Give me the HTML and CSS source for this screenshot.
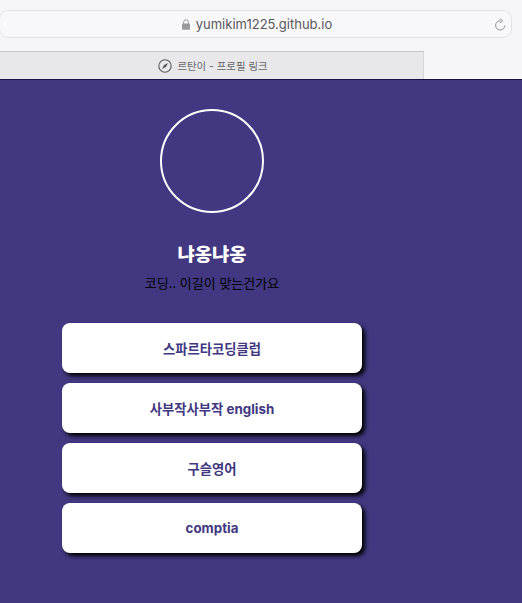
FILE: index.html
```html
<!DOCTYPE html>
<html lang="ko">
<head>
<meta charset="utf-8">
<title>르탄이 - 프로필 링크</title>
<link rel="stylesheet" href="styles.css">
</head>
<body>
<header class="chrome">
  <div class="address">
    <div class="address-center">
      <svg class="lock" viewBox="0 0 8 11" width="8" height="11"><path d="M1.6 5V3.2a2.4 2.4 0 0 1 4.8 0V5" fill="none" stroke="#9a999c" stroke-width="1"/><rect x="0" y="4.6" width="8" height="6.2" rx="1" fill="#9a999c"/></svg>
      <span class="url">yumikim1225.github.io</span>
    </div>
    <svg class="reload" viewBox="0 0 12 13" width="12" height="13"><path d="M6.6 2.8A4.6 4.6 0 1 0 10.8 7.6" fill="none" stroke="#8f8e91" stroke-width="1"/><path d="M6 0.6L8.6 2.8L6 4.8" fill="none" stroke="#8f8e91" stroke-width="1"/></svg>
  </div>
  <div class="tabs">
    <div class="tab">
      <svg class="compass" viewBox="0 0 14 14" width="14" height="14"><circle cx="7" cy="7" r="6.2" fill="none" stroke="#5c5b5e" stroke-width="1.1"/><path d="M10 4L8 8L4 10L6 6Z" fill="#5c5b5e"/></svg>
      <span class="tab-title">르탄이 - 프로필 링크</span>
    </div>
  </div>
</header>
<main class="page">
  <div class="profile">
    <div class="avatar"></div>
    <h1 class="name">냐옹냐옹</h1>
    <p class="bio">코딩.. 이길이 맞는건가요</p>
    <nav class="links">
      <a class="link">스파르타코딩클럽</a>
      <a class="link">사부작사부작 english</a>
      <a class="link">구슬영어</a>
      <a class="link">comptia</a>
    </nav>
  </div>
</main>
</body>
</html>
```
FILE: styles.css
```css
* { box-sizing: border-box; }
html, body { margin: 0; padding: 0; height: 100%; overflow: hidden; }
body {
  display: flex;
  flex-direction: column;
  background: #f6f5f8;
  font-family: Inter, "Noto Sans CJK KR", sans-serif;
}
.chrome { height: 79px; flex: none; padding-top: 10px; }
.address {
  width: 513px;
  height: 28px;
  margin-left: -1px;
  border: 1px solid #e4e3e6;
  border-radius: 9px;
  background: #f8f7fa;
  display: flex;
  align-items: center;
  justify-content: center;
  position: relative;
}
.address-center { display: flex; align-items: center; gap: 6px; padding-left: 3px; }
.lock { display: block; }
.url { font-size: 13px; color: #59585b; }
.reload { position: absolute; right: 5px; top: 7px; }
.tabs { margin-top: 13px; height: 28px; }
.tab {
  width: 424px;
  height: 28px;
  background: #e8e7e9;
  border-top: 1px solid #c6c5c8;
  border-right: 1px solid #d6d5d8;
  display: flex;
  align-items: center;
  justify-content: center;
  gap: 5px;
  padding-left: 3px;
}
.tab-title { font-size: 10.4px; color: #69686b; }
.compass { display: block; }
.page {
  flex: 1;
  background: #413881;
  border-top: 1px solid #17124a;
  min-height: 0;
}
.profile {
  width: 300px;
  margin-left: 62px;
  display: flex;
  flex-direction: column;
  align-items: center;
  padding-top: 29px;
}
.avatar {
  width: 104px;
  height: 104px;
  border: 2px solid #fff;
  border-radius: 50%;
}
.name {
  margin: 29px 0 0;
  font-size: 18.72px;
  line-height: 26px;
  font-weight: 800;
  color: #fff;
}
.bio {
  margin: 6px 0 0;
  font-size: 13px;
  line-height: 19px;
  color: #000;
}
.links {
  width: 100%;
  margin-top: 30px;
  display: flex;
  flex-direction: column;
  gap: 10px;
}
.link {
  height: 50px;
  display: flex;
  align-items: center;
  justify-content: center;
  background: #fff;
  border-radius: 8px;
  box-shadow: 3px 3px 4px #000;
  color: #413881;
  font-size: 13.33px;
  font-weight: 700;
}
```
